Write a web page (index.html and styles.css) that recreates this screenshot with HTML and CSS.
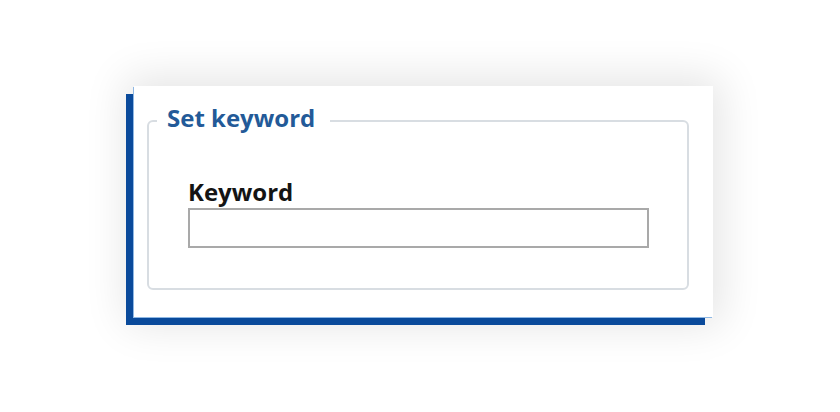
FILE: index.html
```html
<!DOCTYPE html>
<html lang="en">
<head>
<meta charset="utf-8">
<title>Set keyword</title>
<link rel="stylesheet" href="styles.css">
</head>
<body>
<div class="stage">
  <div class="card">
    <fieldset class="group">
      <legend class="group-title">Set keyword</legend>
      <div class="field">
        <label class="field-label" for="kw">Keyword</label>
        <input class="field-input" id="kw" type="text">
      </div>
    </fieldset>
  </div>
</div>
</body>
</html>
```
FILE: styles.css
```css
html, body {
  margin: 0;
  padding: 0;
  background: #ffffff;
}
body {
  width: 840px;
  height: 412px;
  overflow: hidden;
  font-family: "Open Sans", "Noto Sans", "Liberation Sans", sans-serif;
}
.stage {
  padding: 86px 0 0 134px;
}
.card {
  width: 579px;
  height: 231px;
  box-sizing: border-box;
  background: #ffffff;
  padding: 15px 24px 0 13px;
  box-shadow:
    -1px 1px 0 #8fb8e4,
    -8px 8px 0 #0a4a9b,
    0 0 40px 8px rgba(0, 0, 0, 0.11);
}
.group {
  margin: 0;
  padding: 0;
  border: 2px solid #d8dde2;
  border-radius: 6px;
  min-width: 0;
}
.group-title {
  margin-left: 8px;
  padding: 0 15px 7px 10px;
  font-size: 24px;
  font-weight: 700;
  color: #235a98;
}
.field {
  display: flex;
  flex-direction: column;
  padding: 34px 36px 40px 39px;
}
.field-label {
  font-size: 24px;
  font-weight: 700;
  color: #141414;
  line-height: 33px;
}
.field-input {
  box-sizing: border-box;
  height: 40px;
  width: 461px;
  margin: 0;
  border: 2px solid #a9a9a9;
  background: #ffffff;
  padding: 0 6px;
  font-family: inherit;
  font-size: 16px;
  outline: none;
}
```
